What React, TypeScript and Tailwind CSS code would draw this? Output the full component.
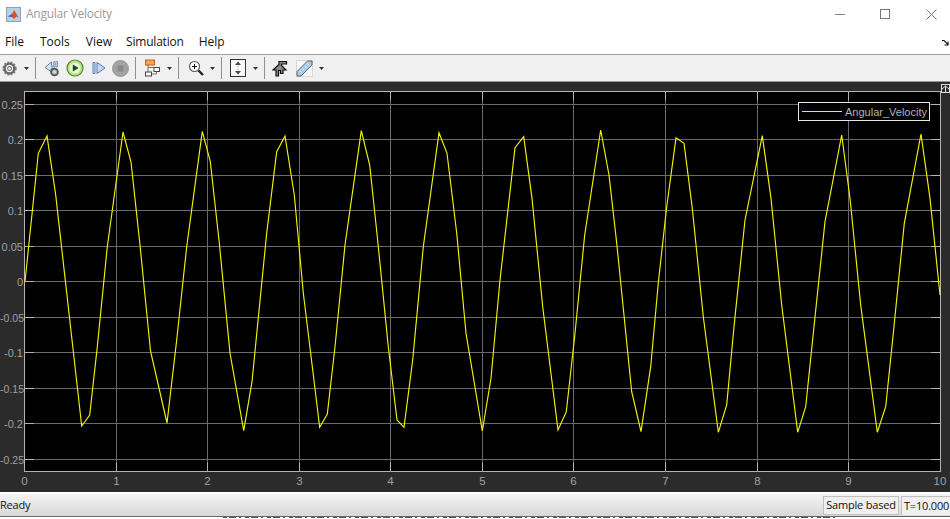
import React from "react";

const W = 950;
const H = 410;
const OY = 82;
const trace = [
  [25,281.7],[38.3,153.3],[47,136],[55.7,195],[81.7,426],[89.7,415],[97.3,346.7],[107.3,246.7],[123,132],[131,162],[140,245],[150.5,351],[167,423],[176.7,340],[186.7,246.7],[202.3,131.3],[210.3,161.7],[219.3,243],[230,353],[243.7,430.7],[252,381.7],[266.7,233],[276.7,151.7],[285,136],[294.3,195],[303.3,293],[319.7,427.3],[327.3,414],[335,346.7],[345,245],[361.3,130.7],[369.7,165],[377.3,236.7],[388.3,346.7],[397,420],[404,427.3],[412.7,360],[423.3,246.7],[439,132.7],[447,153.3],[456.7,233],[466,333.3],[482.3,431],[491,378.3],[500,280],[515,147.7],[523.7,136.7],[532,198.3],[542.7,306.7],[558,430],[566.3,411.7],[575,333.3],[584.7,235],[600.7,130],[609,175],[616.7,243],[631.7,391.7],[641,431.7],[650.7,366.7],[658.3,283],[666.7,206.7],[676,137.7],[684,143.3],[692.3,208.3],[703.3,316.7],[718.3,432.3],[726.7,405],[734,326.7],[745,220],[762.3,135.7],[771,198.3],[781.7,305],[797.7,432.3],[805.7,406.7],[813.3,333.3],[825,221.7],[841.7,135],[850,198.3],[860.7,305],[877.3,432.3],[885.7,406.7],[893.3,333.3],[904.3,223.3],[921,134],[930,198.3],[940,295],
];
const hLines: [number, string][] = [
  [104.5,"0.25"],[139.5,"0.2"],[175.5,"0.15"],[210.5,"0.1"],[246.5,"0.05"],[281.5,"0"],[317.5,"-0.05"],[352.5,"-0.1"],[388.5,"-0.15"],[423.5,"-0.2"],[459.5,"-0.25"],
];
const vLines: [number, string][] = [
  [24.5,"0"],[116.5,"1"],[207.5,"2"],[299.5,"3"],[390.5,"4"],[482.5,"5"],[573.5,"6"],[665.5,"7"],[757.5,"8"],[848.5,"9"],[940.5,"10"],
];

function Scope() {
  const points = trace.map(([x, y]) => `${x},${y - OY}`).join(" ");
  const top = 91.5 - OY;
  const bottom = 471.5 - OY;
  return (
    <svg width={W} height={H} viewBox={`0 0 ${W} ${H}`} className="block" fontFamily="'Liberation Sans', Arial, sans-serif">
      <rect x="0" y="0" width={W} height={H} fill="#2b2b2b" />
      <rect x="24.5" y={top} width="916" height={bottom - top} fill="#000" stroke="#b4b4b4" />
      {hLines.map(([y, l]) => (
        <g key={l}>
          <line x1="25" x2="940" y1={y - OY} y2={y - OY} stroke="#6a6a6a" />
          <line x1="25" x2="34" y1={y - OY} y2={y - OY} stroke="#b4b4b4" />
          <line x1="931" x2="940" y1={y - OY} y2={y - OY} stroke="#b4b4b4" />
          <text x={l.length === 5 ? 24 : 23} y={y - OY + 4} textAnchor="end" fontSize={l.length === 5 ? 10.5 : 11} fill="#a0a0a0">{l}</text>
        </g>
      ))}
      {vLines.map(([x, l]) => (
        <g key={l}>
          {x > 25 && x < 940 && <line x1={x} x2={x} y1={top} y2={bottom} stroke="#6a6a6a" />}
          {x > 25 && x < 940 && <line x1={x} x2={x} y1={top} y2={top + 9} stroke="#b4b4b4" />}
          {x > 25 && x < 940 && <line x1={x} x2={x} y1={bottom - 9} y2={bottom} stroke="#b4b4b4" />}
          <text x={l === "10" ? 940 : x} y={bottom + 13} textAnchor="middle" fontSize="11.5" fill="#a0a0a0">{l}</text>
        </g>
      ))}
      <polyline points={points} fill="none" stroke="#f5f500" strokeWidth="1.15" strokeLinejoin="miter" />
      <rect x="798.5" y={102.5 - OY} width="131" height="18" fill="#000" stroke="#e6e6e6" />
      <line x1="802" x2="842" y1={111.5 - OY} y2={111.5 - OY} stroke="#f5f500" />
      <text x="845" y={116 - OY} fontSize="11" fill="#b4b4b4">Angular_Velocity</text>
      <rect x="941.5" y={84.5 - OY} width="8" height="8" fill="#2b2b2b" stroke="#e0e0e0" />
      <path d={`M942 ${89 - OY}L945.5 ${86 - OY}L949 ${89 - OY}M945.5 ${86 - OY}V${92 - OY}`} stroke="#e0e0e0" fill="none" />
    </svg>
  );
}

function Caret() {
  return (
    <svg width="5" height="3" viewBox="0 0 5 3"><path d="M0 0H5L2.5 3Z" fill="#333" /></svg>
  );
}

function Sep() {
  return <div className="h-[22px] w-px shrink-0 bg-[#8f8f8f]" />;
}

function Slot({ w, children }: { w: number; children?: React.ReactNode }) {
  return <div className="flex shrink-0 items-center justify-center h-full" style={{ width: w }}>{children}</div>;
}

function Gear({ size = 15 }: { size?: number }) {
  return (
    <svg width={size} height={size} viewBox="0 0 16 16">
      <circle cx="8" cy="8" r="5.2" fill="none" stroke="#666" strokeWidth="2.6" />
      <circle cx="8" cy="8" r="6.8" fill="none" stroke="#777" strokeWidth="1.6" strokeDasharray="2 1.6" />
      <circle cx="8" cy="8" r="2.1" fill="#f4f4f4" stroke="#333" strokeWidth="0.8" />
    </svg>
  );
}

function Toolbar() {
  return (
    <div className="flex h-[26px] items-center bg-[#f0f0f0] pl-[1px]">
      <Slot w={17}><Gear /></Slot>
      <Slot w={16}><Caret /></Slot>
      <Slot w={1} />
      <Sep />
      <Slot w={8} />
      <Slot w={16}>
        <svg width="16" height="17" viewBox="0 0 16 17">
          <path d="M7.5 2L1 7.5L7 11.5V9H8V5H7.5Z" fill="#dbe7f6" stroke="#5a7fb0" />
          <path d="M9.5 1.5H11V7H9.5ZM12 1.5H13.5V7H12Z" fill="#dbe7f6" stroke="#5a7fb0" strokeWidth="0.7" />
          <circle cx="10.5" cy="12" r="3.4" fill="#bbb" stroke="#555" strokeWidth="1.8" />
          <circle cx="10.5" cy="12" r="1.1" fill="#eee" />
        </svg>
      </Slot>
      <Slot w={6} />
      <Slot w={18}>
        <svg width="18" height="18" viewBox="0 0 18 18">
          <circle cx="9" cy="9" r="8" fill="#b9dd8c" stroke="#4f8a1f" strokeWidth="1.2" />
          <circle cx="9" cy="9" r="5.6" fill="#e6f4d3" />
          <path d="M6.8 5.4L12.6 9L6.8 12.6Z" fill="#1e4a12" />
        </svg>
      </Slot>
      <Slot w={7} />
      <Slot w={15}>
        <svg width="14" height="14" viewBox="0 0 14 14">
          <path d="M1 1.5H3V12.5H1Z" fill="#c8dbf2" stroke="#4f79b5" strokeWidth="0.9" />
          <path d="M5 1.5L13 7L5 12.5Z" fill="#c8dbf2" stroke="#4f79b5" strokeWidth="1" />
        </svg>
      </Slot>
      <Slot w={6} />
      <Slot w={17}>
        <svg width="17" height="17" viewBox="0 0 17 17">
          <circle cx="8.5" cy="8.5" r="8" fill="#a3a3a3" stroke="#989898" />
          <rect x="5.5" y="5.5" width="6" height="6" fill="#8a8a8a" />
        </svg>
      </Slot>
      <Slot w={6} />
      <Sep />
      <Slot w={8} />
      <Slot w={17}>
        <svg width="17" height="18" viewBox="0 0 17 18">
          <rect x="1.5" y="1" width="9" height="5" fill="#f6a44d" stroke="#c8601a" />
          <rect x="1.5" y="13" width="6" height="4" fill="#fff" stroke="#444" />
          <rect x="10" y="8.5" width="5.5" height="4" fill="#fff" stroke="#444" />
          <path d="M4 6V8.5H10M7.5 15H12.5V12.5M4 8.5V13" fill="none" stroke="#555" strokeWidth="0.8" />
        </svg>
      </Slot>
      <Slot w={5} />
      <Slot w={7}><Caret /></Slot>
      <Slot w={5} />
      <Sep />
      <Slot w={9} />
      <Slot w={16}>
        <svg width="16" height="16" viewBox="0 0 16 16">
          <circle cx="6.5" cy="6.5" r="5" fill="#fff" stroke="#555" strokeWidth="1.1" />
          <path d="M4 6.5H9M6.5 4V9" stroke="#111" strokeWidth="1" />
          <path d="M10.5 10.5L15 15" stroke="#222" strokeWidth="2.4" />
        </svg>
      </Slot>
      <Slot w={5} />
      <Slot w={7}><Caret /></Slot>
      <Slot w={5} />
      <Sep />
      <Slot w={8} />
      <Slot w={16}>
        <svg width="16" height="18" viewBox="0 0 16 18">
          <rect x="0.5" y="0.5" width="15" height="17" fill="#fbfbfb" stroke="#333" />
          <path d="M8 2.5L11 6H5ZM8 15.5L5 12H11Z" fill="#444" />
          <path d="M8 7V8M8 10V11" stroke="#999" />
        </svg>
      </Slot>
      <Slot w={6} />
      <Slot w={7}><Caret /></Slot>
      <Slot w={5} />
      <Sep />
      <Slot w={7} />
      <Slot w={16}>
        <svg width="16" height="17" viewBox="0 0 16 17">
          <path d="M4 16V10H1L7 4.5V1.5H14.5V4H9.5V5.5L14 10H11V13.5H8.5V10.5H6.5V16Z" fill="#8a8a8a" stroke="#111" strokeWidth="1.2" />
        </svg>
      </Slot>
      <Slot w={8} />
      <Slot w={17}>
        <svg width="17" height="17" viewBox="0 0 17 17">
          <path d="M0.5 0.5H16.5V16.5H0.5Z" fill="#f7f7f7" stroke="#bbb" strokeDasharray="1 1" />
          <path d="M1 11.5L11.5 1H16V5L5 16H1Z" fill="#a9cde8" stroke="#555" strokeWidth="0.9" />
          <path d="M4 11L5.5 12.5M6.5 8.5L8 10M9 6L10.5 7.5M11.5 3.5L13 5" stroke="#eef" strokeWidth="0.9" />
        </svg>
      </Slot>
      <Slot w={5} />
      <Slot w={7}><Caret /></Slot>
    </div>
  );
}

export default function App() {
  const ui = { fontFamily: "'Open Sans', 'Noto Sans', sans-serif" };
  return (
    <div className="relative h-[519px] w-[950px] overflow-hidden bg-white" style={ui}>
      <div className="flex h-[28px] items-center bg-white pl-[6px]">
        <svg width="15" height="15" viewBox="0 0 15 15" className="shrink-0">
          <rect x="0.5" y="0.5" width="14" height="14" fill="#b9cfe6" stroke="#8aa3bd" />
          <path d="M2 9.5L6 7L8 3L10 6L13 11L10.5 9.5L8 12L5.5 9.5Z" fill="#d9541e" />
          <path d="M2 9.5L6 7L7 9L5.5 10Z" fill="#2d6fb2" />
        </svg>
        <span className="ml-[5px] text-[12px] leading-none tracking-[-0.25px] text-[#9a9a9a]">Angular Velocity</span>
        <div className="ml-auto flex items-center">
          <div className="mr-[35px] h-px w-[10px] bg-[#888]" />
          <div className="mr-[36px] h-[10px] w-[10px] border border-[#777]" />
          <svg width="11" height="11" viewBox="0 0 11 11" className="mr-[13px]"><path d="M0.5 0.5L10.5 10.5M10.5 0.5L0.5 10.5" stroke="#777" /></svg>
        </div>
      </div>
      <div className="relative flex h-[26px] items-center bg-white pl-[5px] pt-[2px] text-[12px] text-[#111]">
        <span className="mr-[16px]">File</span>
        <span className="mr-[16px]">Tools</span>
        <span className="mr-[14px]">View</span>
        <span className="mr-[15px] tracking-[-0.2px]">Simulation</span>
        <span>Help</span>
        <svg width="8" height="7" viewBox="0 0 8 7" className="absolute right-0 top-[11px]"><path d="M0 1.5H2L6 5.5M6 2.5V6H2.5" fill="none" stroke="#111" strokeWidth="1.1" /></svg>
      </div>
      <div className="h-px bg-[#a0a0a0]" />
      <Toolbar />
      <div className="h-px bg-[#9a9a9a]" />
      <Scope />
      <div className="h-[2px] bg-white" />
      <div className="flex h-[22px] items-center bg-gradient-to-b from-[#f4f4f4] to-[#d8d8d8] pt-[1px] text-[11px] tracking-[-0.2px] text-[#111]">
        <span>Ready</span>
        <div className="ml-auto flex h-[20px] items-center gap-[2px]">
          <div className="flex h-[19px] w-[76px] items-center justify-center border border-[#c0c0c0] bg-[#f0f0f0]">Sample based</div>
          <div className="flex h-[19px] w-[49px] items-center border-l border-t border-[#c0c0c0] bg-[#f0f0f0] pl-[2px]">T=10.000</div>
        </div>
      </div>
      <div className="h-px bg-[#666]" />
      <svg width="950" height="2" className="block">
        <line x1="223" x2="835" y1="0.5" y2="0.5" stroke="#555" strokeDasharray="4 2 7 3 2 4" />
      </svg>
    </div>
  );
}
